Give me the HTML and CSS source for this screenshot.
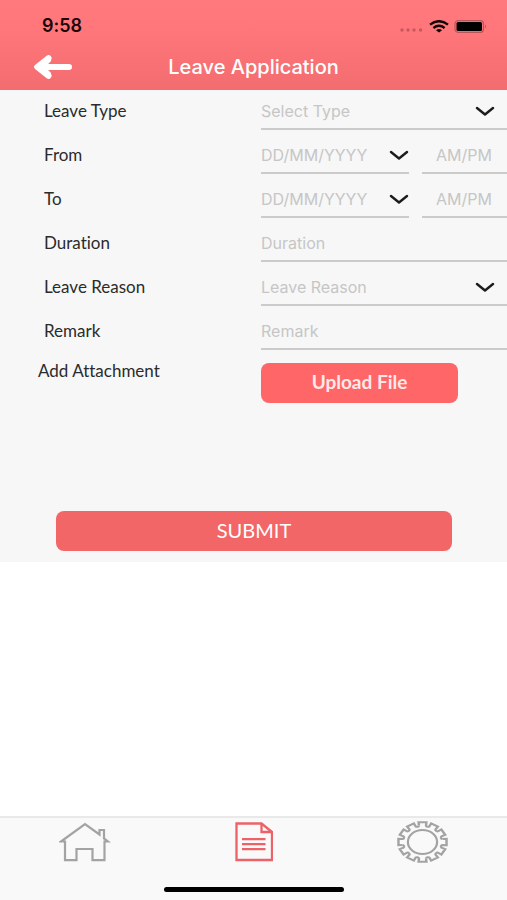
FILE: index.html
```html
<!DOCTYPE html>
<html lang="en">
<head>
<meta charset="utf-8">
<meta name="viewport" content="width=device-width, initial-scale=1">
<title>Leave Application</title>
<link rel="stylesheet" href="styles.css">
</head>
<body>
<header class="header">
  <div class="status">
    <span class="time">9:58</span>
    <div class="status-icons">
      <svg width="24" height="6" viewBox="0 0 24 6" fill="#c8585c" aria-hidden="true"><circle cx="2" cy="3" r="1.700"/><circle cx="8" cy="3" r="1.700"/><circle cx="14" cy="3" r="1.700"/><circle cx="20.500" cy="3" r="1.700"/></svg>
      <svg width="20" height="13" viewBox="0 0 20 13" fill="none" stroke="#120506" stroke-width="2.4" aria-hidden="true"><path d="M1 4.6Q10-2.2 19 4.6"/><path d="M4.4 8Q10 3.6 15.6 8"/><path d="M7 10.2Q10 8 13 10.2L10 12.6Z" fill="#120506" stroke="none"/></svg>
      <svg width="33" height="13" viewBox="0 0 33 13" aria-hidden="true"><rect x="1" y=".7" width="28.500" height="11.600" rx="3" fill="none" stroke="#b9565a" stroke-width="1.200"/><rect x="2.500" y="2" width="25.500" height="9" rx="1.500" fill="#000"/><path d="M31 4.500q2 2 0 4z" fill="#b9565a"/></svg>
    </div>
  </div>
  <div class="nav">
    <a class="back" href="#" aria-label="Back">
      <svg width="38" height="24" viewBox="0 0 38 24" fill="none" stroke="#fff" stroke-width="6" stroke-linecap="round" stroke-linejoin="round" aria-hidden="true"><path d="M35 12H6"/><path d="M14.500 3.200 3.200 12l11.300 8.800"/><path d="M14 5 7 12l7 7"/></svg>
    </a>
    <h1 class="title">Leave Application</h1>
  </div>
</header>

<main>
  <form class="form">
    <div class="row">
      <label for="type">Leave Type</label>
      <div class="field">
        <select id="type" class="control"><option>Select Type</option></select>
        <svg class="chevron" viewBox="0 0 20 10" aria-hidden="true"><path d="M2 2 10 8.500l8-6.500"/></svg>
      </div>
    </div>
    <div class="row">
      <label for="from">From</label>
      <div class="pair">
        <div class="field date">
          <input id="from" class="control" type="text" placeholder="DD/MM/YYYY">
          <svg class="chevron" viewBox="0 0 20 10" aria-hidden="true"><path d="M2 2 10 8.500l8-6.500"/></svg>
        </div>
        <div class="field"><input class="control half" type="text" placeholder="AM/PM" aria-label="From AM/PM"></div>
      </div>
    </div>
    <div class="row">
      <label for="to">To</label>
      <div class="pair">
        <div class="field date">
          <input id="to" class="control" type="text" placeholder="DD/MM/YYYY">
          <svg class="chevron" viewBox="0 0 20 10" aria-hidden="true"><path d="M2 2 10 8.500l8-6.500"/></svg>
        </div>
        <div class="field"><input class="control half" type="text" placeholder="AM/PM" aria-label="To AM/PM"></div>
      </div>
    </div>
    <div class="row">
      <label for="duration">Duration</label>
      <div class="field"><input id="duration" class="control" type="text" placeholder="Duration"></div>
    </div>
    <div class="row">
      <label for="reason">Leave Reason</label>
      <div class="field">
        <select id="reason" class="control"><option>Leave Reason</option></select>
        <svg class="chevron" viewBox="0 0 20 10" aria-hidden="true"><path d="M2 2 10 8.500l8-6.500"/></svg>
      </div>
    </div>
    <div class="row">
      <label for="remark">Remark</label>
      <div class="field"><input id="remark" class="control" type="text" placeholder="Remark"></div>
    </div>
    <div class="row attachment">
      <span id="attachment">Add Attachment</span>
      <button class="button upload" type="button" aria-describedby="attachment">Upload File</button>
    </div>
    <button class="button submit" type="submit">SUBMIT</button>
  </form>
</main>

<nav class="tabs">
  <a class="tab" href="#" aria-label="Home">
    <svg width="52" height="42" viewBox="0 0 52 42" fill="none" stroke="#a3a3a3" stroke-width="2.200" aria-hidden="true"><path d="M6 39.200V20.500H2L26 3l14.500 10.500V9h4.500v8.500l4 3h-3.500v18.700H33.500V28H17.500v11.200z"/></svg>
  </a>
  <a class="tab" href="#" aria-label="Applications" aria-current="page">
    <svg width="38" height="42" viewBox="0 0 38 42" fill="none" stroke="#ec6266" stroke-width="2.300" aria-hidden="true"><path d="M1.500 2.500H26.500L37 11v28H1.500z"/><path d="M26.500 2.500V11H37M7 18.200h23.500M7 23.200h23.500M7 28.200h23.500"/></svg>
  </a>
  <a class="tab" href="#" aria-label="Settings">
    <svg width="52" height="42" viewBox="-25.500 -21 52 42" fill="none" stroke="#a3a3a3" stroke-width="2.200" aria-hidden="true">
      <defs><path id="teeth" d="M-2.900-16.300-3.200-19.700H3.200L2.900-16.300A1.700 1.700 0 0 0 5.640-15.570L7.080-18.660 12.620-15.460 10.660-12.670A1.700 1.700 0 0 0 12.670-10.660L15.460-12.620 18.660-7.080 15.570-5.640A1.700 1.700 0 0 0 16.300-2.900"/></defs>
      <g transform="scale(1.220 1)" stroke-width="2"><use href="#teeth"/><use href="#teeth" transform="rotate(90)"/><use href="#teeth" transform="rotate(180)"/><use href="#teeth" transform="rotate(270)"/></g>
      <ellipse rx="14.600" ry="12"/>
    </svg>
  </a>
  <span class="indicator"></span>
</nav>
</body>
</html>
```
FILE: styles.css
```css
* {
  box-sizing: border-box;
}

body {
  margin: 0;
  min-height: 100vh;
  display: flex;
  flex-direction: column;
  background: #fff;
  color: #2b2b2b;
  font: 16px/20px Inter, "Liberation Sans", sans-serif;
  font-variant-ligatures: none;
  overflow-x: hidden;
}

main {
  flex: 1;
}

.header {
  height: 90px;
  padding-top: 16px;
  background: linear-gradient(#ff797d, #ff777b 30%, #f36c70);
}

.status {
  display: flex;
  align-items: center;
  justify-content: space-between;
  padding: 0 20px 0 42px;
}

.time {
  color: #1d0809;
  font-size: 18px;
  font-weight: 600;
}

.status-icons {
  display: flex;
  align-items: center;
  gap: 5px;
}

.status-icons svg:first-child {
  align-self: flex-end;
}

.nav {
  display: grid;
  grid-template-columns: 1fr auto 1fr;
  align-items: center;
  height: 40px;
  margin-top: 11px;
  padding: 0 34px;
}

.back svg {
  display: block;
}

.title {
  margin: 0;
  color: #fff;
  font-size: 20px;
  font-weight: 500;
}

.form {
  display: flex;
  flex-direction: column;
  gap: 4px;
  padding-bottom: 11px;
  background: #f7f7f7;
}

.row {
  display: grid;
  grid-template-columns: 217px 1fr;
  padding-left: 44px;
  color: #2b2b2b;
  font-family: Lato, "Liberation Sans", sans-serif;
  font-size: 17px;
}

.row label {
  padding-top: 11px;
}

.field {
  display: grid;
  align-items: center;
  height: 40px;
  padding-top: 4px;
  border-bottom: 2px solid #cbcbcb;
}

.pair {
  display: grid;
  grid-template-columns: 148px 1fr;
  gap: 13px;
}

.control {
  grid-area: 1 / 1;
  width: 100%;
  height: 32px;
  margin: 0;
  padding: 0;
  border: 0;
  outline: 0;
  appearance: none;
  background: transparent;
  color: #c6c6c6;
  font: 16px/20px Inter, "Liberation Sans", sans-serif;
}

.control::placeholder {
  color: #c6c6c6;
  opacity: 1;
}

.half {
  padding-left: 14px;
}

.chevron {
  grid-area: 1 / 1;
  justify-self: end;
  width: 20px;
  height: 10px;
  margin-right: 12px;
  fill: none;
  stroke: #1c1c1c;
  stroke-width: 2.4;
  stroke-linecap: round;
  stroke-linejoin: round;
  pointer-events: none;
}

.date .chevron {
  margin-right: 0;
}

.attachment {
  grid-template-columns: 223px 197px;
  margin-top: 9px;
  padding-left: 38px;
}

.attachment span {
  line-height: 16px;
}

.button {
  height: 40px;
  padding: 0 0 3px;
  border: 0;
  border-radius: 8px;
  color: #fff;
  font-family: Lato, "Liberation Sans", sans-serif;
}

.upload {
  background: #ff6667;
  color: #ffe9e9;
  font-size: 19px;
  font-weight: 700;
}

.submit {
  margin: 104px 55px 0 56px;
  background: #f36667;
  font-size: 20px;
}

.tabs {
  position: relative;
  display: grid;
  grid-template-columns: repeat(3, 1fr);
  height: 84px;
  padding-top: 3px;
  border-top: 2px solid #e9e9e9;
  background: #f9f9f9;
}

.tab {
  display: flex;
  justify-content: center;
}

.indicator {
  position: absolute;
  bottom: 8px;
  left: 50%;
  width: 180px;
  height: 5px;
  border-radius: 3px;
  background: #000;
  transform: translateX(-50%);
}
```
